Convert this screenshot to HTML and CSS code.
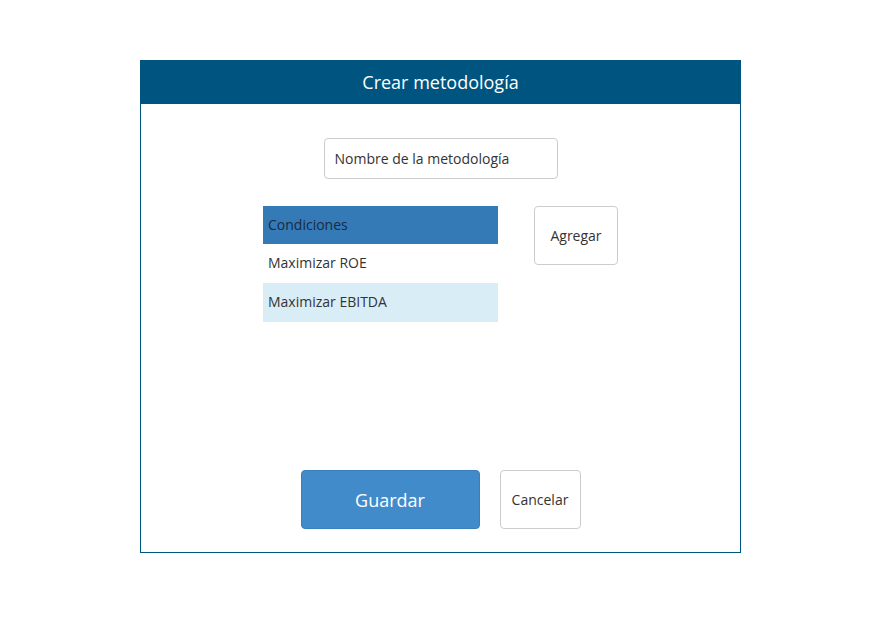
FILE: index.html
```html
<!DOCTYPE html>
<html lang="es">
<head>
<meta charset="utf-8">
<title>Crear metodología</title>
<link rel="stylesheet" href="styles.css">
</head>
<body>
<div class="dialog">
  <div class="dialog-header">Crear metodología</div>
  <div class="dialog-body">
    <div class="name-field">Nombre de la metodología</div>
    <div class="list-row">
      <ul class="cond-list">
        <li class="item active">Condiciones</li>
        <li class="item">Maximizar ROE</li>
        <li class="item info">Maximizar EBITDA</li>
      </ul>
      <button class="btn btn-add">Agregar</button>
    </div>
    <div class="actions">
      <button class="btn btn-primary">Guardar</button>
      <button class="btn btn-cancel">Cancelar</button>
    </div>
  </div>
</div>
</body>
</html>
```
FILE: styles.css
```css
* { box-sizing: border-box; }
html, body { margin: 0; padding: 0; background: #fff; }
body {
  font-family: "Open Sans", "Liberation Sans", sans-serif;
  font-size: 14px;
  color: #333;
}
.dialog {
  margin: 60px 0 0 140px;
  width: 601px;
  height: 493px;
  border: 1px solid #005580;
  border-top: none;
  display: flex;
  flex-direction: column;
}
.dialog-header {
  background: #005580;
  color: #fff;
  height: 44px;
  line-height: 44px;
  text-align: center;
  font-size: 18px;
  margin: 0 -1px;
}
.dialog-body {
  flex: 1;
  display: flex;
  flex-direction: column;
  align-items: center;
  padding-top: 34px;
}
.name-field {
  width: 234px;
  height: 41px;
  border: 1px solid #ccc;
  border-radius: 4px;
  padding: 0 10px;
  line-height: 39px;
  color: #333;
}
.list-row {
  margin-top: 27px;
  height: 264px;
  display: flex;
  gap: 36px;
  align-items: flex-start;
}
.cond-list {
  list-style: none;
  margin: 0;
  padding: 0;
  width: 235px;
}
.item {
  height: 39px;
  line-height: 38px;
  padding-left: 5px;
}
.item.active {
  background: #337ab7;
  color: #1a2a40;
  height: 38px;
}
.item.info {
  background: #d9edf7;
}
.btn {
  font-family: "Open Sans", "Liberation Sans", sans-serif;
  font-size: 14px;
  color: #333;
  background: #fff;
  border: 1px solid #ccc;
  border-radius: 4px;
  padding: 0;
  cursor: pointer;
}
.btn-add {
  width: 84px;
  height: 59px;
}
.actions {
  display: flex;
  gap: 20px;
}
.btn-primary {
  width: 179px;
  height: 59px;
  background: #428bca;
  border-color: #3a7fbd;
  color: #fff;
  font-size: 18px;
}
.btn-cancel {
  width: 81px;
  height: 59px;
}
```
